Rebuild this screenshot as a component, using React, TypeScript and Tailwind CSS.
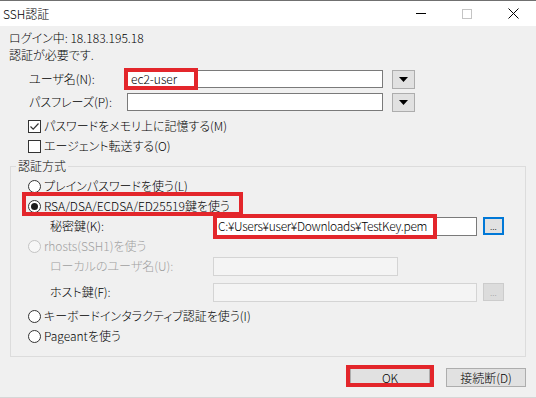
import React from 'react';

function Radio({ checked = false, disabled = false }: { checked?: boolean; disabled?: boolean }) {
  return (
    <span
      className={
        disabled
          ? 'w-[13px] h-[13px] rounded-full border border-[#c4c4c4] bg-[#f7f7f7] flex items-center justify-center shrink-0'
          : 'w-[13px] h-[13px] rounded-full border border-[#333333] bg-white flex items-center justify-center shrink-0'
      }
    >
      {checked && <span className="w-[7px] h-[7px] rounded-full bg-[#1b1b1b]" />}
    </span>
  );
}

function Checkbox({ checked = false }: { checked?: boolean }) {
  return (
    <span className="w-[13px] h-[13px] border border-[#333333] bg-white flex items-center justify-center shrink-0">
      {checked && (
        <svg width="11" height="11" viewBox="0 0 11 11">
          <path d="M1.5 5.5 L4.2 8.2 L9.5 2.5" stroke="#333" strokeWidth="1.2" fill="none" />
        </svg>
      )}
    </span>
  );
}

function DropButton() {
  return (
    <div className="ml-[9px] w-[23px] h-[19px] bg-[#e1e1e1] border border-[#adadad] flex items-center justify-center">
      <svg width="9" height="5" viewBox="0 0 9 5">
        <path d="M0 0H9L4.5 5Z" fill="#000" />
      </svg>
    </div>
  );
}

export default function App() {
  return (
    <div className="w-[536px] h-[398px] overflow-hidden bg-[#f0f0f0] border-t border-[#707070] border-b border-b-[#d6d6d6] text-[12px] leading-[16px] text-black font-light font-['Noto_Sans_CJK_JP',sans-serif] [font-feature-settings:'palt']">
      {/* title bar */}
      <div className="h-[25px] bg-white flex items-center">
        <span className="pl-[3px] flex-1">SSH認証</span>
        <div className="flex h-full">
          <div className="w-[46px] flex items-center justify-center">
            <span className="w-[10px] h-px bg-black" />
          </div>
          <div className="w-[46px] flex items-center justify-center">
            <span className="w-[10px] h-[10px] border border-[#c4c4c4]" />
          </div>
          <div className="w-[46px] flex items-center justify-center">
            <svg width="11" height="11" viewBox="0 0 11 11">
              <path d="M0.5 0.5L10.5 10.5M10.5 0.5L0.5 10.5" stroke="#000" strokeWidth="1" />
            </svg>
          </div>
        </div>
      </div>

      <div className="pt-[3px]">
        <div className="pl-[9px] leading-[17px]">
          <div>ログイン中: 18.183.195.18</div>
          <div>認証が必要です.</div>
        </div>

        <div className="mt-[6px] flex items-center h-[20px]">
          <span className="w-[127px] pl-[29px] shrink-0">ユーザ名(N):</span>
          <div className="relative w-[256px] h-[18px] bg-white border border-[#7a7a7a] flex items-center pl-[3px]">
            ec2-user
            <span className="absolute left-[-4px] top-[-3px] w-[74px] h-[22px] border-[4px] border-[#e3262b]" />
          </div>
          <DropButton />
        </div>

        <div className="mt-[3px] flex items-center h-[20px]">
          <span className="w-[127px] pl-[29px] shrink-0">パスフレーズ(P):</span>
          <div className="w-[256px] h-[18px] bg-white border border-[#7a7a7a]" />
          <DropButton />
        </div>

        <div className="mt-[4px] pl-[28px]">
          <div className="flex items-center h-[20px] gap-[3px]">
            <Checkbox checked />
            <span>パスワードをメモリ上に記憶する(M)</span>
          </div>
          <div className="flex items-center h-[20px] gap-[3px]">
            <Checkbox />
            <span>エージェント転送する(O)</span>
          </div>
        </div>

        <fieldset className="mt-[2px] mx-[10px] border border-[#dcdcdc] pb-[10px]">
          <legend className="ml-[5px] px-[2px] leading-[16px]">認証方式</legend>
          <div className="pt-[2px]">
            <div className="flex items-center h-[20px] pl-[17px] gap-[3px]">
              <Radio />
              <span>プレインパスワードを使う(L)</span>
            </div>
            <div className="relative flex items-center h-[20px] pl-[17px] gap-[3px]">
              <Radio checked />
              <span>RSA/DSA/ECDSA/ED25519鍵を使う</span>
              <span className="absolute left-[11px] top-[-4px] w-[221px] h-[24px] border-[4px] border-[#e3262b]" />
            </div>
            <div className="flex items-center h-[20px]">
              <span className="w-[202px] pl-[39px] shrink-0">秘密鍵(K):</span>
              <div className="relative w-[264px] h-[19px] bg-white border border-[#7a7a7a] flex items-center pl-[4px] whitespace-nowrap tracking-[-0.3px]">
                C:¥Users¥user¥Downloads¥TestKey.pem
                <span className="absolute left-[-1px] top-[-4px] w-[224px] h-[25px] border-[4px] border-[#e3262b]" />
              </div>
              <div className="ml-[6px] w-[21px] h-[18px] bg-[#e1e1e1] border-2 border-[#0078d7] flex items-center justify-center text-[9px] leading-none">
                ...
              </div>
            </div>
            <div className="flex items-center h-[20px] pl-[17px] gap-[3px] text-[#a0a0a0]">
              <Radio disabled />
              <span>rhosts(SSH1)を使う</span>
            </div>
            <div className="flex items-center h-[20px]">
              <span className="w-[202px] pl-[39px] shrink-0 text-[#a0a0a0]">ローカルのユーザ名(U):</span>
              <div className="w-[185px] h-[19px] bg-[#f4f4f4] border border-[#d4d4d4]" />
            </div>
            <div className="mt-[6px] flex items-center h-[20px]">
              <span className="w-[202px] pl-[39px] shrink-0">ホスト鍵(F):</span>
              <div className="w-[264px] h-[19px] bg-[#f4f4f4] border border-[#d4d4d4]" />
              <div className="ml-[6px] w-[21px] h-[18px] bg-[#dcdcdc] border border-[#cccccc] flex items-center justify-center text-[9px] leading-none text-[#a0a0a0]">
                ...
              </div>
            </div>
            <div className="mt-[4px] flex items-center h-[20px] pl-[17px] gap-[3px]">
              <Radio />
              <span>キーボードインタラクティブ認証を使う(I)</span>
            </div>
            <div className="flex items-center h-[20px] pl-[17px] gap-[3px]">
              <Radio />
              <span>Pageantを使う</span>
            </div>
          </div>
        </fieldset>

        <div className="mt-[11px] flex justify-end pr-[10px] gap-[16px]">
          <div className="relative w-[80px] h-[19px] bg-[#e1e1e1] border border-[#adadad] flex items-center justify-center">
            OK
            <span className="absolute left-[-5px] right-[-5px] top-[-4px] bottom-[-1px] border-[4px] border-[#e3262b]" />
          </div>
          <div className="w-[80px] h-[19px] bg-[#e1e1e1] border border-[#adadad] flex items-center justify-center">
            接続断(D)
          </div>
        </div>
      </div>
    </div>
  );
}
